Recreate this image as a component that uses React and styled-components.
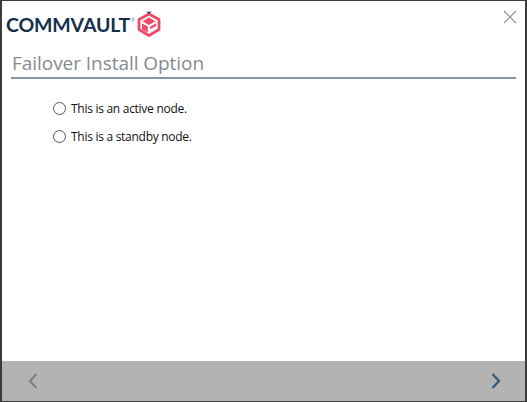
import React from 'react';
import styled, { createGlobalStyle } from 'styled-components';

const GlobalStyle = createGlobalStyle`
  html, body {
    margin: 0;
    padding: 0;
    background: #fff;
  }
`;

const Window = styled.div`
  box-sizing: border-box;
  width: 527px;
  height: 402px;
  border: 1px solid #3c3c3c;
  border-left-width: 2px;
  border-right-width: 2px;
  background: #fff;
  display: flex;
  flex-direction: column;
  position: relative;
  font-family: "Open Sans", "Noto Sans", sans-serif;
`;

const CloseButton = styled.button`
  position: absolute;
  top: 9px;
  right: 8px;
  width: 14px;
  height: 14px;
  padding: 0;
  border: none;
  background: none;
  display: flex;
`;

const Header = styled.header`
  height: 45px;
  padding: 2px 0 0 4px;
  box-sizing: border-box;
  display: flex;
  align-items: center;
`;

const Brand = styled.span`
  font-family: "Lato", "Open Sans", sans-serif;
  font-weight: 700;
  font-size: 19.5px;
  letter-spacing: -0.15px;
  color: #14304a;
  line-height: 1;
`;

const Trademark = styled.sup`
  font-size: 5px;
  color: #7a8796;
  align-self: flex-start;
  margin: 15px 1px 0 1px;
  line-height: 1;
`;

const Title = styled.h1`
  margin: 0 9px 0 9px;
  padding: 3px 0 0 1px;
  height: 33px;
  box-sizing: border-box;
  border-bottom: 2px solid #8497a8;
  font-size: 19px;
  letter-spacing: -0.05px;
  line-height: 28px;
  font-weight: 400;
  color: #848b93;
`;

const Options = styled.form`
  flex: 1;
  padding: 20px 0 0 51px;
  display: flex;
  flex-direction: column;
  gap: 10px;
`;

const Option = styled.label`
  display: flex;
  align-items: center;
  gap: 5px;
  height: 18px;
  font-size: 12px;
  letter-spacing: -0.28px;
  color: #111;
`;

const Radio = styled.span`
  width: 11px;
  height: 11px;
  border: 1px solid #555;
  border-radius: 50%;
  background: #fff;
  flex: none;
`;

const Footer = styled.footer`
  height: 40px;
  background: #b3b3b3;
  display: flex;
  align-items: center;
  justify-content: space-between;
  padding: 0 23px 0 25px;
`;

const NavButton = styled.button`
  padding: 0;
  border: none;
  background: none;
  display: flex;
  color: ${props => props.$color};
`;

const Logo = () => (
  <svg width="26" height="27" viewBox="0 0 26 27" fill="none">
    <path d="M13 3 L23 8.5 V18.5 L13 24.5 L3 18.5 V8.5 Z" stroke="#ee4a6a" strokeWidth="2.8" strokeLinejoin="round" />
    <path d="M13 6.5 L19.5 10.3 L13 14 L6.5 10.3 Z" fill="#ee4a6a" />
    <path d="M6 12.3 L11.8 15.6 V21.5 L6 18.2 Z" fill="#ee4a6a" />
    <path d="M14.2 15.6 L20 12.3 V15 L14.2 18.2 Z" fill="#ee4a6a" />
    <path d="M10 0.8 H16 L13 2.4 Z" fill="#14304a" />
  </svg>
);

const Chevron = ({ left }) => (
  <svg width="12" height="18" viewBox="0 0 12 18" fill="none">
    <path
      d={left ? 'M9.5 2 L3 9 L9.5 16' : 'M2.5 2 L9 9 L2.5 16'}
      stroke="currentColor"
      strokeWidth="2.2"
    />
  </svg>
);

const App = () => (
  <>
    <GlobalStyle />
    <Window>
      <CloseButton aria-label="Close">
        <svg width="14" height="14" viewBox="0 0 14 14" fill="none">
          <path d="M1 1 L13 13 M13 1 L1 13" stroke="#8c8c8c" strokeWidth="1.1" />
        </svg>
      </CloseButton>
      <Header>
        <Brand>COMMVAULT</Brand>
        <Trademark>®</Trademark>
        <Logo />
      </Header>
      <Title>Failover Install Option</Title>
      <Options>
        <Option><Radio />This is an active node.</Option>
        <Option><Radio />This is a standby node.</Option>
      </Options>
      <Footer>
        <NavButton aria-label="Back" $color="#808080"><Chevron left /></NavButton>
        <NavButton aria-label="Next" $color="#2f5a7e"><Chevron /></NavButton>
      </Footer>
    </Window>
  </>
);

export default App;
